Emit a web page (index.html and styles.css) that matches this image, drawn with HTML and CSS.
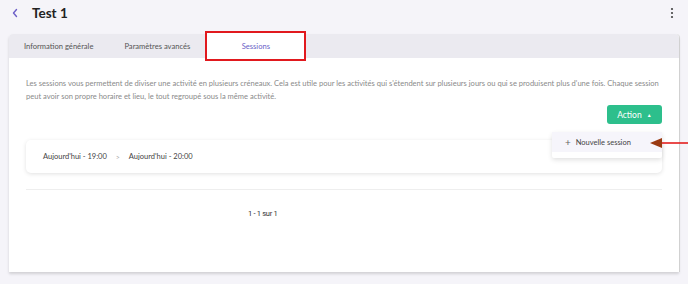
FILE: index.html
```html
<!DOCTYPE html>
<html lang="fr">
<head>
    <meta charset="UTF-8">
    <meta name="viewport" content="width=device-width, initial-scale=1.0">
    <title>Test 1 - Sessions</title>
    <link rel="stylesheet" href="styles.css">
</head>
<body>
    <header class="top-bar">
        <span class="back">
            <svg width="8" height="10" viewBox="0 0 8 10"><path d="M5.5 1.5 L2.5 5 L5.5 8.5" fill="none" stroke="#6c5fc7" stroke-width="1.4" stroke-linecap="round" stroke-linejoin="round"/></svg>
        </span>
        <h1>Test 1</h1>
        <span class="kebab">
            <svg width="4" height="12" viewBox="0 0 4 12"><circle cx="2" cy="2" r="1.1" fill="#444"/><circle cx="2" cy="6" r="1.1" fill="#444"/><circle cx="2" cy="10" r="1.1" fill="#444"/></svg>
        </span>
    </header>

    <div class="card">
        <nav class="tabs">
            <div class="tab">Information générale</div>
            <div class="tab">Paramètres avancés</div>
            <div class="tab active">Sessions</div>
        </nav>
        <div class="content">
            <p class="intro">Les sessions vous permettent de diviser une activité en plusieurs créneaux. Cela est utile pour les activités qui s'étendent sur plusieurs jours ou qui se produisent plus d'une fois. Chaque session peut avoir son propre horaire et lieu, le tout regroupé sous la même activité.</p>

            <div class="actions">
                <button class="btn-action">Action <span class="caret">&#9650;</span></button>
                <div class="menu">
                    <div class="menu-item"><span class="plus">+</span> Nouvelle session</div>
                </div>
                <svg class="pointer" width="40" height="12" viewBox="0 0 40 12">
                    <line x1="10" y1="6" x2="40" y2="6" stroke="#e41e1e" stroke-width="1.6"/>
                    <polygon points="0,6 12,1 12,11" fill="#9a3a12"/>
                </svg>
            </div>

            <div class="session">
                <span>Aujourd'hui - 19:00</span>
                <span class="sep">&gt;</span>
                <span>Aujourd'hui - 20:00</span>
            </div>

            <div class="pager">1 - 1 sur 1</div>
        </div>
    </div>
</body>
</html>
```

FILE: styles.css
```css
body { margin: 0; background: #f5f4f9; font-family: Lato, "Noto Sans", sans-serif; color: #333; width: 688px; height: 284px; overflow: hidden; }
.top-bar { height: 34px; display: flex; align-items: center; padding: 0 14px 0 11px; box-sizing: border-box; }
.back { width: 8px; height: 10px; display: flex; margin-right: 13px; margin-top: -9px; }
.top-bar h1 { font-size: 13.5px; font-weight: 700; margin: -9px 0 0; color: #222; }
.kebab { margin-left: auto; display: flex; margin-top: -9px; }
.card { margin: 0 9px; background: #fff; border-radius: 4px 4px 0 0; box-shadow: 0 2px 3px rgba(0,0,0,0.15), 1px 0 0 #ddd; height: 238px; }
.tabs { height: 24px; background: #ebeaf0; display: flex; border-radius: 4px 4px 0 0; }
.tab { font-size: 7.6px; color: #555; line-height: 24px; padding: 0 15px; }
.tab:nth-child(2) { padding-left: 16px; }
.tab.active { background: #fff; color: #6c5fc7; width: 99px; text-align: center; box-sizing: border-box; margin-left: 1px; outline: 2px solid #e1191e; outline-offset: -1px; height: 28px; margin-top: -2px; line-height: 28px; }
.content { padding: 19px 17px 0; position: relative; }
.intro { margin: 0; font-size: 7.55px; line-height: 13px; color: #8a8a8a; }
.actions { display: flex; justify-content: flex-end; margin-top: 2px; position: relative; }
.btn-action { background: #2dbf8c; color: #fff; border: none; border-radius: 3px; font-family: inherit; font-size: 8.5px; height: 19px; width: 55px; padding: 0; }
.caret { font-size: 5px; margin-left: 3px; vertical-align: 1px; }
.menu { position: absolute; right: 0; top: 27px; width: 110px; background: #fff; box-shadow: 0 2px 5px rgba(0,0,0,0.12); border-radius: 2px; padding-bottom: 6px; z-index: 2; }
.menu-item { background: #f6f5fb; font-size: 7.5px; color: #444; height: 20px; line-height: 20px; padding-left: 13px; }
.plus { font-size: 10px; color: #666; margin-right: 3px; vertical-align: -1px; }
.pointer { position: absolute; right: -28px; top: 32px; z-index: 3; }
.session { margin-top: 16px; height: 33px; border-radius: 5px; box-shadow: 0 1px 4px rgba(0,0,0,0.12); display: flex; align-items: center; padding-left: 17px; font-size: 7.5px; color: #444; gap: 9px; }
.sep { color: #aaa; font-size: 7px; }
.pager { margin-top: 16px; border-top: 1px solid #eee; padding-top: 19px; font-family: Roboto, sans-serif; font-size: 7.5px; letter-spacing: -0.3px; color: #333; padding-left: 222px; }
```
